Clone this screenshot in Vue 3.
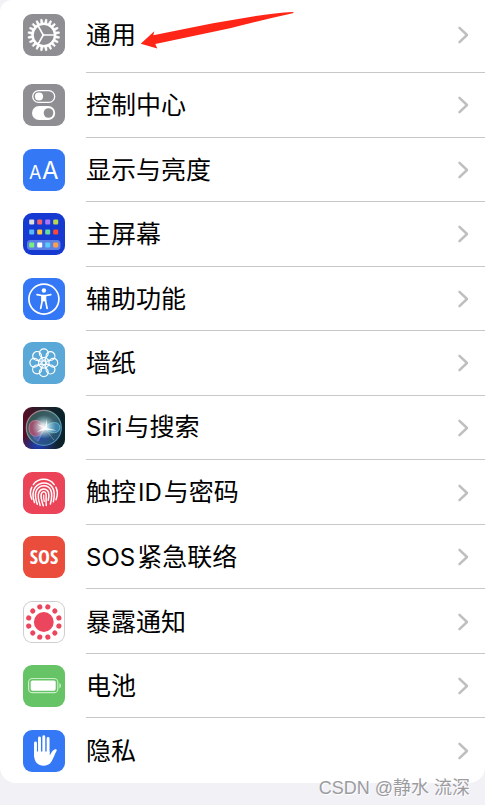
<script setup>
const rows = [
  { id: 'general', label: '通用' },
  { id: 'control', label: '控制中心' },
  { id: 'display', label: '显示与亮度' },
  { id: 'home', label: '主屏幕' },
  { id: 'access', label: '辅助功能' },
  { id: 'wallpaper', label: '墙纸' },
  { id: 'siri', latin: 'Siri', label: '与搜索' },
  { id: 'touch', lead: '触控', latin: 'ID', label: '与密码' },
  { id: 'sos', latin: 'SOS', label: '紧急联络' },
  { id: 'exposure', label: '暴露通知' },
  { id: 'battery', label: '电池' },
  { id: 'privacy', label: '隐私' }
]

const appColors = [
  ['#dfe0dc', '#f4606b', '#aa78f7', '#b9d84f'],
  ['#58b9f7', '#ffc637', '#67dba0', '#fb4938'],
  ['#76f07e', '#ffffff', '#5bcbfa', '#fc9f50']
]
const appRowY = [6.5, 16.5, 29.5]

const around = (count, offset = 0) =>
  Array.from({ length: count }, (_, i) => offset + (i * 360) / count)
</script>

<template>
  <main class="screen">
    <ul class="card">
      <li v-for="row in rows" :key="row.id" class="item">
        <a class="row" :href="'#' + row.id">
          <svg class="icon" :class="row.id" viewBox="0 0 42 42" aria-hidden="true">
            <g v-if="row.id === 'general'" fill="none" stroke="#fff">
              <circle cx="20.8" cy="21" r="11.2" stroke-width="2.3" />
              <path
                v-for="a in around(20, 9)" :key="a"
                d="M19.6 9.5 20.1 5.2h1.4l.5 4.3z" fill="#fff" stroke-width=".6"
                :transform="`rotate(${a} 20.8 21)`"
              />
              <path d="M21 21H31.5M20 20.6 15 11.6M20 21.400 15 30.400" stroke-width="1.7" />
              <circle cx="20.2" cy="21" r="1.2" fill="#fff" stroke="none" />
            </g>

            <g v-else-if="row.id === 'control'">
              <rect x="9.7" y="6.7" width="22" height="11.6" rx="5.8" fill="none" stroke="#fff" stroke-width="1.3" />
              <circle cx="16" cy="12.5" r="4.1" fill="#fff" />
              <rect x="9" y="22" width="23.2" height="14" rx="7" fill="#fff" />
              <circle cx="25.5" cy="29" r="4.8" fill="#8e8e93" />
            </g>

            <g v-else-if="row.id === 'display'" class="letters" fill="#fff">
              <text x="6" y="30" font-size="18">A</text>
              <text x="19" y="30" font-size="24">A</text>
            </g>

            <g v-else-if="row.id === 'home'">
              <rect x="4" y="27" width="33.5" height="10" rx="3.5" fill="#5c7fe4" />
              <template v-for="(line, r) in appColors" :key="r">
                <rect
                  v-for="(color, c) in line" :key="c"
                  :x="6.2 + c * 8" :y="appRowY[r]" width="5" height="5" rx="1" :fill="color"
                />
              </template>
            </g>

            <g v-else-if="row.id === 'access'" fill="none" stroke="#fff" stroke-linecap="round" stroke-linejoin="round">
              <circle cx="20.9" cy="21.1" r="15" stroke-width="1.7" />
              <circle cx="20.9" cy="12.5" r="2.2" fill="#fff" stroke="none" />
              <path d="M14 16.6 18.8 17.5h4.2l4.8-.9" stroke-width="1.6" />
              <path d="M19 17.5h3.8v5.4h-3.8z" fill="#fff" stroke-width="1" />
              <path d="M19.3 22.5 17.7 30.3M22.5 22.5 24.1 30.3" stroke-width="1.7" />
            </g>

            <g v-else-if="row.id === 'wallpaper'" fill="none" stroke="#fff" stroke-width="1.2">
              <g v-for="a in around(8)" :key="a" :transform="`rotate(${a} 20.8 20.8)`">
                <circle cx="20.8" cy="11.3" r="4.4" />
                <path d="M20.8 18.8 18.4 15.000M20.8 18.8 23.2 15" stroke-width=".9" />
              </g>
              <circle cx="20.8" cy="20.8" r="2" />
            </g>

            <g v-else-if="row.id === 'siri'">
              <defs>
                <linearGradient id="siri-bg" x1="0" y1="0" x2="1" y2="0">
                  <stop offset="0" stop-color="#5a0d24" />
                  <stop offset=".45" stop-color="#21202b" />
                  <stop offset="1" stop-color="#07232b" />
                </linearGradient>
                <linearGradient id="siri-ball" x1="0" y1="0" x2="1" y2="1">
                  <stop offset="0" stop-color="#315a50" />
                  <stop offset=".5" stop-color="#426c79" />
                  <stop offset="1" stop-color="#174c73" />
                </linearGradient>
                <linearGradient id="siri-rim" x1="0" y1="0" x2="1" y2="1">
                  <stop offset="0" stop-color="#cc7084" />
                  <stop offset=".45" stop-color="#67a39a" />
                  <stop offset="1" stop-color="#4684ce" />
                </linearGradient>
                <radialGradient id="siri-blue">
                  <stop offset="0" stop-color="#1d3fb8" />
                  <stop offset="1" stop-color="#1d3fb8" stop-opacity="0" />
                </radialGradient>
                <radialGradient id="siri-glow">
                  <stop offset="0" stop-color="#fff" />
                  <stop offset=".25" stop-color="#f2fdff" stop-opacity=".95" />
                  <stop offset="1" stop-color="#a9e1ea" stop-opacity="0" />
                </radialGradient>
              </defs>
              <rect width="42" height="42" fill="url(#siri-bg)" />
              <ellipse cx="15" cy="39" rx="20" ry="13" fill="url(#siri-blue)" />
              <circle cx="20.8" cy="20.8" r="17.5" fill="url(#siri-ball)" fill-opacity=".85" stroke="url(#siri-rim)" stroke-width="1.2" />
              <ellipse cx="19" cy="31" rx="12" ry="9" fill="url(#siri-blue)" fill-opacity=".6" />
              <path d="M22 21C18 11 6 11 6 21s11 12 16 0z" fill="#c94a70" fill-opacity=".7" stroke="#e993a8" stroke-width=".6" />
              <path d="M9 27C13 31 17 27 22 22l-7 13c-3-1-5-4-6-8z" fill="#6a78c8" fill-opacity=".5" />
              <path d="M21 21c5-6 15-8 16-1 0 7-9 8-16 1z" fill="#4a9fd0" fill-opacity=".65" stroke="#81d5e8" stroke-width=".6" />
              <path d="M21 22 15 34M22 22l9 11" stroke="#8db8e8" stroke-opacity=".6" stroke-width=".8" />
              <ellipse cx="21" cy="20" rx="12" ry="12" fill="url(#siri-glow)" fill-opacity=".85" />
              <path d="M14 17 22 20l2-8v9l10 2.500-12-.5-8 2 6-4z" fill="#fff" fill-opacity=".8" />
            </g>

            <g v-else-if="row.id === 'touch'" fill="none" stroke="#fff" stroke-width="1.5" stroke-linecap="round">
              <path d="M10.3 12.6C15.5 5.6 26 5.6 31.2 12.6" />
              <path d="M8.8 27.2C6.6 22.5 7.2 18.5 8.8 15.2M32.8 15.2C34.8 19 34.6 24 33 27.8" />
              <path d="M11.5 30.5C8.5 22 10 18.3 12.3 15.2 17 9.3 25.5 9.7 29.3 15.2 31.7 19 31.7 24.5 30.3 29.8" />
              <path d="M14.3 32.3C11.7 25 12 21 13.6 18.1 17 12.2 25 12.3 27.8 18.1 29.4 22 28.7 27 27.4 32" />
              <path d="M17.2 33.4C14.7 26 14.8 22.5 16 20.1 18.2 16 23.5 16 25.4 20.1 26.4 23 25.9 25.5 25.2 28.3" />
              <path d="M20.3 33.7C18 27 17.6 24 18.3 21.7 19.3 19 22.3 19 23 21.7 23.5 24 22.7 29 23.3 33.5" />
              <path d="M20.7 23C20.5 26 20.9 27.5 21.2 29.5" stroke-width="1.2" />
            </g>

            <text v-else-if="row.id === 'sos'" class="sos-text" x="21" y="28" text-anchor="middle" font-size="20" fill="#fff">SOS</text>

            <g v-else-if="row.id === 'exposure'" fill="#ec465f">
              <circle cx="20.8" cy="21" r="9.9" />
              <circle
                v-for="a in around(12, 15)" :key="a"
                cx="20.8" cy="5.4" r="2.6" :transform="`rotate(${a} 20.8 21)`"
              />
            </g>

            <g v-else-if="row.id === 'battery'">
              <rect x="5.6" y="13.5" width="29.2" height="14.2" rx="3.8" fill="none" stroke="#c8edc7" stroke-width="1.2" />
              <rect x="7.7" y="15.5" width="25" height="10.2" rx="1.8" fill="#fff" />
              <path d="M36.3 18c2.2 1 2.2 4.4 0 5.4z" fill="#c8edc7" />
            </g>

            <g v-else fill="#fff" stroke="#fff" stroke-linecap="round">
              <path d="M12.5 13V26M16.5 8V24M20.8 6.8V24M25.1 8.5V26" stroke-width="2.9" />
              <path
                d="M11.05 21.5H26.55V25.5C28.2 23.8 29.2 20.2 31.5 19.5 33 19 34.3 19.6 33.5 21.1 31.7 24.3 30.4 28.8 28.2 32 25.3 36.5 17.5 37 14 33.3 11.7 31 11.05 28 11.05 24z"
                stroke="none"
              />
            </g>
          </svg>

          <span class="label">
            <span v-if="row.lead">{{ row.lead }}</span>
            <span v-if="row.latin" class="latin">{{ row.latin }}</span>
            <span>{{ row.label }}</span>
          </span>

          <svg class="chevron" viewBox="0 0 12 18" aria-hidden="true">
            <path d="M2.5 1.8 10 9 2.5 16.2" fill="none" stroke="#bfbfc2" stroke-width="2.5" stroke-linecap="round" stroke-linejoin="round" />
          </svg>
        </a>
      </li>
    </ul>

    <svg class="arrow" viewBox="0 0 154 38" aria-hidden="true">
      <path d="M.7 32.7 14.3 20.3 13.3 24.3 73 12.300 110 6Q135 1.800 152.700 1 154.500 1.600 152.700 2.300 120 9.500 90 17.300L15.300 33 17.300 37.500z" fill="#ff2517" />
    </svg>
    <p class="watermark">CSDN @静水 流深</p>
  </main>
</template>

<style>
body {
  background: #f2f1f6;
}
</style>

<style scoped>
.screen {
  position: relative;
  padding-bottom: 22px;
  font-family: Inter, "Noto Sans CJK SC", sans-serif;
  color: #000;
}

.card {
  display: grid;
  grid-template-rows: 73px;
  grid-auto-rows: 1fr;
  min-height: 783px;
  margin: 0;
  padding: 0;
  list-style: none;
  background: #fff;
  border-radius: 12px 0 16px 16px;
}

.item {
  display: grid;
}

.row {
  display: grid;
  grid-template-columns: 42px 1fr 12px;
  align-items: center;
  column-gap: 21px;
  padding: 0 16px 0 23px;
  color: inherit;
  text-decoration: none;
  background: linear-gradient(#c8c8ca, #c8c8ca) 86px 100% / 100% 1px no-repeat;
}

.item:first-child .row {
  padding-bottom: 3px;
}

.item:last-child .row {
  background: none;
}

.icon {
  box-sizing: border-box;
  width: 42px;
  height: 42px;
  border-radius: 9px;
}

.general,
.control {
  background: #8e8e93;
}

.display,
.access,
.privacy {
  background: #3478f6;
}

.home {
  background: #1539d1;
}

.wallpaper {
  background: #59a8d8;
}

.touch {
  background: #eb4459;
}

.sos {
  background: #eb4d3d;
}

.exposure {
  background: #fff;
  box-shadow: inset 0 0 0 1px #cfcfd1;
}

.battery {
  background: #67c466;
}

.letters {
  font-family: Inter, sans-serif;
}

.sos-text {
  font-family: "Liberation Sans Narrow", "Open Sans Condensed", "Roboto Condensed", "Liberation Sans", sans-serif;
  font-weight: 700;
}

.label {
  display: flex;
  align-items: baseline;
  gap: 2px;
  font-size: 25px;
  line-height: 36px;
  white-space: nowrap;
}

.latin {
  font-size: 24px;
}

.chevron {
  width: 12px;
  height: 18px;
}

.arrow {
  position: absolute;
  top: 11px;
  left: 140px;
  width: 154px;
  height: 38px;
  pointer-events: none;
}

.watermark {
  position: absolute;
  right: 15px;
  bottom: 5px;
  margin: 0;
  font-family: "Liberation Sans", "Noto Sans CJK SC", sans-serif;
  font-size: 18px;
  line-height: 24px;
  color: #9c9c9f;
  text-shadow: 1px 1px 0 #fff;
  white-space: nowrap;
}
</style>
